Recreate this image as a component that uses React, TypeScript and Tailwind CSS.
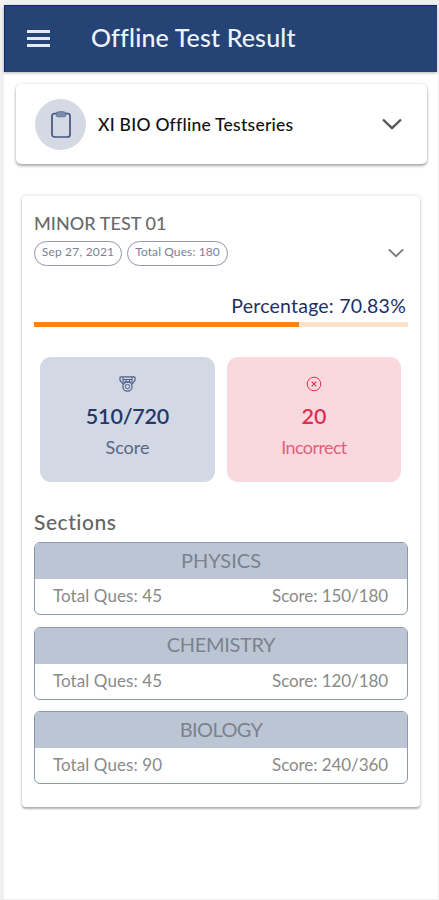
import { useState } from 'react'

interface Section {
  name: string
  tracking: string
  total: number
  score: string
}

const sections: Section[] = [
  { name: 'PHYSICS', tracking: 'tracking-[0px]', total: 45, score: '150/180' },
  { name: 'CHEMISTRY', tracking: 'tracking-[-0.35px]', total: 45, score: '120/180' },
  { name: 'BIOLOGY', tracking: 'tracking-[-0.6px]', total: 90, score: '240/360' },
]

const percentage = 70.83

function Chevron({ className }: { className: string }) {
  return (
    <svg className={className} fill="none" stroke="currentColor" viewBox="0 0 20 12">
      <path strokeWidth={2.4} d="M1 1.500l9 8.500 9-8.500" />
    </svg>
  )
}

export default function App() {
  const [seriesOpen, setSeriesOpen] = useState(false)

  return (
    <div className="h-[900px] w-[439px] overflow-hidden bg-[#f0f0f0] pt-[5px] pr-px pb-px pl-1 font-['Lato',sans-serif] whitespace-nowrap [font-variant-ligatures:none]">
      <div className="h-full bg-white">
        {/* Header */}
        <header className="mr-px flex h-[67px] items-center border-t border-l border-[#12246a] bg-[#254375] pl-[22px] text-[#eef3fb] shadow-[0_1px_3px_rgba(0,0,0,0.3)]">
          <button className="mb-px flex w-[23px] flex-col gap-[4px]">
            <span className="h-[3px] w-full bg-[#e4eaf5]" />
            <span className="h-[3px] w-full bg-[#e4eaf5]" />
            <span className="h-[3px] w-full bg-[#e4eaf5]" />
          </button>
          <h1 className="ml-[41px] pb-[3px] text-[25px] leading-none font-medium tracking-[0.15px]">Offline Test Result</h1>
        </header>

        {/* Series selector */}
        <button
          onClick={() => setSeriesOpen(!seriesOpen)}
          className="mt-3 ml-3 flex h-20 w-[411px] items-center rounded-[5px] bg-white pl-[19px] text-left shadow-[0_2px_3px_rgba(0,0,0,0.32),0_0_3px_rgba(0,0,0,0.12)]"
        >
          <span className="flex size-[51px] items-center justify-center rounded-full bg-[#d4d9e4]">
            <svg className="h-[27px] w-5 text-[#3f5582]" fill="none" stroke="currentColor" viewBox="0 0 20 27">
              <rect x="1" y="2.500" width="18" height="23.500" rx="2.500" strokeWidth={1.7} />
              <path d="M5 2q1-1.500 5-1.500T15 2v2q0 1.800-2 1.800H7Q5 5.800 5 4z" fill="#7d8cab" strokeWidth={0.6} />
            </svg>
          </span>
          <span className="mt-[2px] ml-3 w-[196px] text-[17.5px] leading-none font-medium tracking-[0.25px] text-[#111]">XI BIO Offline Testseries</span>
          <Chevron className="ml-[88px] h-3 w-5 text-[#555]" />
        </button>

        {/* Result card */}
        <main className="mt-8 ml-[18px] h-[611px] w-[398px] rounded-[4px] bg-white px-3 pt-[18px] shadow-[0_2px_2px_rgba(0,0,0,0.28),0_0_4px_rgba(0,0,0,0.14)]">
          <h2 className="text-[18px] leading-[18px] font-medium tracking-[0.05px] text-[#6b6b6b]">MINOR TEST 01</h2>
          <div className="mt-[8px] flex h-[26px] items-center">
            <span className="flex h-[25px] w-[88px] items-center justify-center rounded-full border border-[#9297b0] pb-[2px] text-[12px] leading-none tracking-[0.2px] text-[#7b7f95]">Sep 27, 2021</span>
            <span className="ml-[5px] flex h-[25px] w-[101px] items-center justify-center rounded-full border border-[#9297b0] pb-[2px] text-[12px] leading-none tracking-[0.1px] text-[#7b7f95]">Total Ques: 180</span>
            <Chevron className="ml-[160px] h-2.5 w-4 text-[#7c7c7c]" />
          </div>

          <div className="mt-[30px] mr-[2px] text-right text-[19.5px] leading-[20px] tracking-[0.22px] text-[#1d2f66]">Percentage: {percentage}%</div>
          <div className="mt-[6px] h-[5px] bg-[#ffe3c8]">
            <div className="h-full bg-[#fb8414]" style={{ width: `${percentage}%` }} />
          </div>

          <div className="mt-[30px] flex gap-3 px-1.5">
            <div className="flex h-[125px] w-[175px] flex-col items-center rounded-[11px] bg-[#d3d9e4] pt-[19px] text-[#4d5f86]">
              <svg className="h-4 w-[17px]" fill="none" stroke="currentColor" viewBox="0 0 17 16">
                <path strokeWidth={1.2} d="M2 .8h13q1.300 0 1 1.500v2L13 8M2 .8Q.7.800 1 2.300v2L4 8" />
                <path strokeWidth={1} d="M4 1v5h9V1M4 3.500h9M7 3.500V6M10.500 3.500V6" />
                <circle cx="8.5" cy="10.500" r="4.600" strokeWidth={1.2} />
                <circle cx="8.5" cy="10.500" r="2.200" strokeWidth={1} />
              </svg>
              <div className="mt-[14px] text-[21.5px] leading-[20px] font-semibold tracking-[-0.2px] text-[#243869]">510/720</div>
              <div className="mt-[11px] text-[18px] leading-[20px] text-[#596684]">Score</div>
            </div>
            <div className="flex h-[125px] w-[174px] flex-col items-center rounded-[11px] bg-[#fad9de] pt-[19px] text-[#dd3050]">
              <svg className="size-4" fill="none" stroke="currentColor" viewBox="0 0 16 16">
                <circle cx="8" cy="8" r="6.800" strokeWidth={1} />
                <path strokeWidth={1.1} d="M5.700 5.700l4.600 4.600M10.300 5.700l-4.600 4.600" />
              </svg>
              <div className="mt-[14px] text-[21.5px] leading-[20px] font-semibold">20</div>
              <div className="mt-[11px] text-[18px] leading-[20px] tracking-[-0.6px] text-[#e25f76]">Incorrect</div>
            </div>
          </div>

          <h3 className="mt-[29px] text-[21px] leading-[22px] font-medium tracking-[0.55px] text-[#656565]">Sections</h3>
          <div className="mt-[9px] flex flex-col gap-[11.5px]">
            {sections.map((section) => (
              <div key={section.name} className="h-[73px] overflow-hidden rounded-[6px] border border-[#8b98b0]">
                <div className="flex h-9 items-center justify-center bg-[#bcc5d4] pb-[3px] text-[20px] leading-none text-[#7b828e]">
                  <span className={section.tracking}>{section.name}</span>
                </div>
                <div className="flex h-[33px] items-center justify-between pr-[19px] pl-[18px] text-[17px] leading-none text-[#8a8a8a]">
                  <span className="tracking-[0.08px]">Total Ques: {section.total}</span>
                  <span className="tracking-[-0.08px]">Score: {section.score}</span>
                </div>
              </div>
            ))}
          </div>
        </main>
      </div>
    </div>
  )
}
